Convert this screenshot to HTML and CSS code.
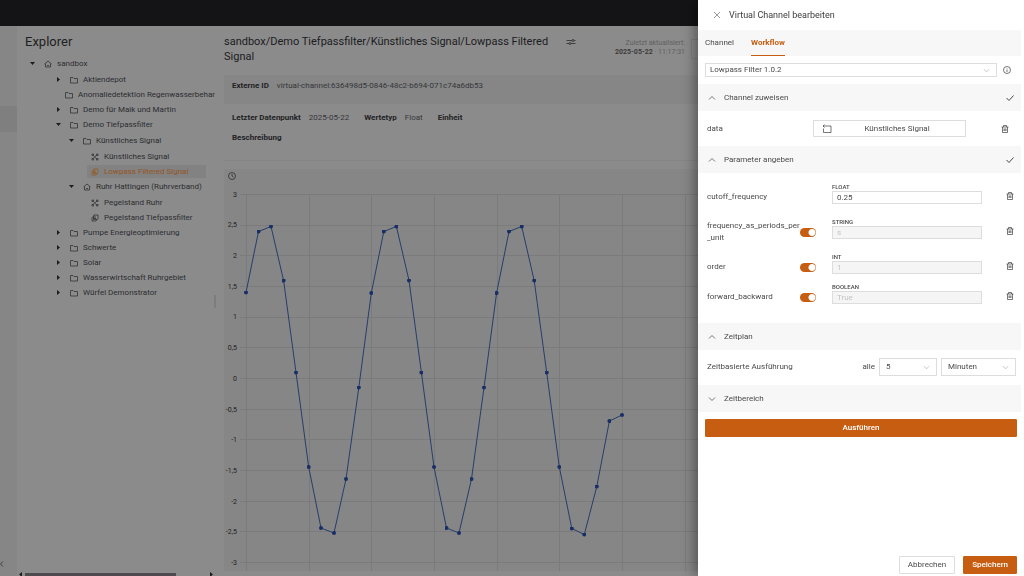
FILE: index.html
```html
<!DOCTYPE html>
<html lang="de">
<head>
<meta charset="utf-8">
<title>Virtual Channel bearbeiten</title>
<link rel="stylesheet" href="styles.css">
</head>
<body>
<svg class="sprite" aria-hidden="true">
  <symbol id="house" viewBox="0 0 16 16"><path d="M1 8 8 2l7 6M3 7v7h10V7M6 10.500q2 2 4 0"/></symbol>
  <symbol id="folder" viewBox="0 0 16 16"><path d="M1 3h5l2 2h7v9H1z"/></symbol>
  <symbol id="signal" viewBox="0 0 16 16"><path d="M2 2h3v3H2zM11 2h3v3h-3zM2 11h3v3H2zM11 11h3v3h-3zM5 5l2 2 3-1 1-1M4 11l3-3 4 3"/></symbol>
  <symbol id="virtual" viewBox="0 0 16 16"><path d="M6 2h8v7q0 2-2 2H5V4q0-2 2-2M11 11v1q0 2-2 2H2V8q0-2 2-2h6M5 9h5"/></symbol>
  <symbol id="up" viewBox="0 0 16 16"><path d="m2 11 6-6 6 6"/></symbol>
  <symbol id="down" viewBox="0 0 16 16"><path d="m2 5 6 6 6-6"/></symbol>
  <symbol id="check" viewBox="0 0 16 16"><path d="m1 8 5 5 9-10"/></symbol>
  <symbol id="trash" viewBox="0 0 16 16"><path d="M1 4h14M5 4V1h6v3M3 4v11h10V4M6 7v5M8 7v5M10 7v5"/></symbol>
</svg>
<div class="app">
  <header class="topbar"></header>
  <div class="workspace">
    <nav class="rail" aria-label="Navigation">
      <span class="rail-active"></span>
      <button class="rail-toggle" aria-label="Einklappen"><svg viewBox="0 0 8 16"><path d="m6 3-5 5 5 5"/></svg></button>
    </nav>
    <aside class="explorer">
      <h1>Explorer</h1>
      <ul class="tree">
        <li><div class="node"><i class="caret open"></i><svg><use href="#house"/></svg><span>sandbox</span></div>
          <ul class="first">
            <li><div class="node"><i class="caret"></i><svg><use href="#folder"/></svg><span>Aktiendepot</span></div></li>
            <li><div class="node"><i class="caret"></i><svg><use href="#folder"/></svg><span>Anomaliedetektion Regenwasserbehandlung</span></div></li>
            <li><div class="node"><i class="caret"></i><svg><use href="#folder"/></svg><span>Demo für Maik und Martin</span></div></li>
            <li><div class="node"><i class="caret open"></i><svg><use href="#folder"/></svg><span>Demo Tiefpassfilter</span></div>
              <ul>
                <li><div class="node"><i class="caret open"></i><svg><use href="#folder"/></svg><span>Künstliches Signal</span></div>
                  <ul>
                    <li><div class="node leaf"><svg><use href="#signal"/></svg><span>Künstliches Signal</span></div></li>
                    <li><div class="node leaf selected"><svg><use href="#virtual"/></svg><span>Lowpass Filtered Signal</span></div></li>
                  </ul>
                </li>
                <li><div class="node"><i class="caret open"></i><svg><use href="#house"/></svg><span>Ruhr Hattingen (Ruhrverband)</span></div>
                  <ul>
                    <li><div class="node leaf"><svg><use href="#signal"/></svg><span>Pegelstand Ruhr</span></div></li>
                    <li><div class="node leaf"><svg><use href="#virtual"/></svg><span>Pegelstand Tiefpassfilter</span></div></li>
                  </ul>
                </li>
              </ul>
            </li>
            <li><div class="node"><i class="caret"></i><svg><use href="#folder"/></svg><span>Pumpe Energieoptimierung</span></div></li>
            <li><div class="node"><i class="caret"></i><svg><use href="#folder"/></svg><span>Schwerte</span></div></li>
            <li><div class="node"><i class="caret"></i><svg><use href="#folder"/></svg><span>Solar</span></div></li>
            <li><div class="node"><i class="caret"></i><svg><use href="#folder"/></svg><span>Wasserwirtschaft Ruhrgebiet</span></div></li>
            <li><div class="node"><i class="caret"></i><svg><use href="#folder"/></svg><span>Würfel Demonstrator</span></div></li>
          </ul>
        </li>
      </ul>
      <div class="hscroll"><i class="caret back"></i><span class="thumb"></span><i class="caret"></i></div>
      <span class="resizer"></span>
    </aside>
    <main class="content">
      <div class="page-head">
        <h2>sandbox/Demo Tiefpassfilter/Künstliches Signal/Lowpass Filtered Signal</h2>
        <button class="tune" aria-label="Einstellungen"><svg viewBox="0 0 20 16"><path d="M1 5h11M16 5h3M1 11h5M10 11h9"/><circle cx="14" cy="5" r="2"/><circle cx="8" cy="11" r="2"/></svg></button>
        <p class="updated">Zuletzt aktualisiert:<br><b>2025-05-22</b> · 11:17:31</p>
        <span class="head-actions"></span>
      </div>
      <dl class="facts shaded"><div><dt>Externe ID</dt><dd>virtual-channel:636498d5-0846-48c2-b694-071c74a6db53</dd></div></dl>
      <dl class="facts">
        <div><dt>Letzter Datenpunkt</dt><dd>2025-05-22</dd></div>
        <div><dt>Wertetyp</dt><dd>Float</dd></div>
        <div><dt>Einheit</dt><dd></dd></div>
      </dl>
      <dl class="facts last"><div><dt>Beschreibung</dt><dd></dd></div></dl>
      <section class="chart">
        <svg class="clock" viewBox="0 0 16 16"><circle cx="8" cy="8" r="7"/><path d="M8 4v4l3 2"/></svg>
        <svg class="plot" width="800" height="396" viewBox="0 0 800 396" role="img" aria-label="Messwerte">
          <defs><marker id="dot" viewBox="0 0 4 4" refX="2" refY="2" markerWidth="4" markerHeight="4" markerUnits="userSpaceOnUse"><circle cx="2" cy="2" r="2"/></marker></defs>
          <path class="grid" d="M16 10.500H800M16 41.500H800M16 71.500H800M16 102.500H800M16 133.500H800M16 163.500H800M16 194.500H800M16 225.500H800M16 255.500H800M16 286.500H800M16 317.500H800M16 347.500H800M16 378.500H800M22.500 10V391M85.500 10V391M147.500 10V391M210.500 10V391M273.500 10V391M335.500 10V391M398.500 10V391M461.500 10V391"/>
          <g class="ticks">
            <text x="13" y="13">3</text><text x="13" y="43">2,5</text><text x="13" y="74">2</text><text x="13" y="105">1,5</text><text x="13" y="135">1</text><text x="13" y="166">0,5</text><text x="13" y="197">0</text><text x="13" y="228">-0,5</text><text x="13" y="258">-1</text><text x="13" y="289">-1,5</text><text x="13" y="320">-2</text><text x="13" y="350">-2,5</text><text x="13" y="381">-3</text>
          </g>
          <polyline class="series" points="22,108.500 34.500,47.500 47,42.500 59.600,96.500 72,188.500 84.700,283 97,344 110,349 122,295 134.800,203.500 147.300,109 159.800,47.500 172.400,42.500 185,96.500 197.400,188.500 210,283 222.500,344 235,349 247.500,295 260,203.500 272.600,109 285,47.500 297.700,42.500 310.200,96.500 322.700,188.500 335.300,283 347.800,344.500 360.300,350.500 372.800,302.500 385.400,237 398,231"/>
        </svg>
      </section>
    </main>
  </div>
</div>

<form class="drawer" aria-label="Virtual Channel bearbeiten">
  <header class="drawer-head">
    <button type="button" aria-label="Schließen"><svg class="ic" viewBox="0 0 16 16"><path d="m2 2 12 12M14 2 2 14"/></svg></button>
    <h2>Virtual Channel bearbeiten</h2>
  </header>
  <div class="tabs" role="tablist">
    <button type="button" role="tab">Channel</button>
    <button type="button" role="tab" aria-selected="true">Workflow</button>
  </div>
  <div class="workflow">
    <div class="select slim"><select aria-label="Workflow"><option>Lowpass Filter 1.0.2</option></select><svg><use href="#down"/></svg></div>
    <svg class="info" viewBox="0 0 16 16"><circle cx="8" cy="8" r="7"/><path d="M8 7v5M8 4v1"/></svg>
  </div>

  <button type="button" class="panel"><svg><use href="#up"/></svg><span>Channel zuweisen</span><svg class="tick"><use href="#check"/></svg></button>
  <div class="assign">
    <span>data</span>
    <button type="button" class="signal"><svg viewBox="0 0 20 18"><path d="M3 9v8h15V4H2M5 1 2 4l3 3"/></svg><span>Künstliches Signal</span></button>
    <button type="button" class="remove small" aria-label="Löschen"><svg><use href="#trash"/></svg></button>
  </div>

  <button type="button" class="panel"><svg><use href="#up"/></svg><span>Parameter angeben</span><svg class="tick"><use href="#check"/></svg></button>
  <div class="params">
    <div class="param">
      <label class="name" for="cutoff">cutoff_frequency</label>
      <span></span>
      <div class="field"><span>FLOAT</span><input id="cutoff" type="text" value="0.25"></div>
      <button type="button" class="remove" aria-label="Löschen"><svg><use href="#trash"/></svg></button>
    </div>
    <div class="param">
      <label class="name" for="periods">frequency_as_periods_per<wbr>_unit</label>
      <input type="checkbox" class="switch" aria-label="Standardwert" checked>
      <div class="field"><span>STRING</span><input id="periods" type="text" value="s" disabled></div>
      <button type="button" class="remove" aria-label="Löschen"><svg><use href="#trash"/></svg></button>
    </div>
    <div class="param">
      <label class="name" for="order">order</label>
      <input type="checkbox" class="switch" aria-label="Standardwert" checked>
      <div class="field"><span>INT</span><input id="order" type="text" value="1" disabled></div>
      <button type="button" class="remove" aria-label="Löschen"><svg><use href="#trash"/></svg></button>
    </div>
    <div class="param">
      <label class="name" for="forward">forward_backward</label>
      <input type="checkbox" class="switch" aria-label="Standardwert" checked>
      <div class="field"><span>BOOLEAN</span><input id="forward" type="text" value="True" disabled></div>
      <button type="button" class="remove" aria-label="Löschen"><svg><use href="#trash"/></svg></button>
    </div>
  </div>

  <button type="button" class="panel"><svg><use href="#up"/></svg><span>Zeitplan</span></button>
  <div class="schedule">
    <span class="caption">Zeitbasierte Ausführung</span>
    <label for="every">alle</label>
    <div class="select count"><select id="every"><option>5</option></select><svg><use href="#down"/></svg></div>
    <div class="select unit"><select aria-label="Einheit"><option>Minuten</option></select><svg><use href="#down"/></svg></div>
  </div>
  <button type="button" class="panel"><svg><use href="#down"/></svg><span>Zeitbereich</span></button>
  <button type="button" class="btn primary run">Ausführen</button>
  <footer class="drawer-foot">
    <button type="button" class="btn">Abbrechen</button>
    <button type="submit" class="btn primary">Speichern</button>
  </footer>
</form>
</body>
</html>
```

FILE: styles.css
```css
* { box-sizing: border-box; margin: 0; padding: 0; }
body { font: 8px/12px Roboto, "Liberation Sans", sans-serif; color: #262626; }
button, input, select { font: inherit; color: inherit; background: none; border: 0; border-radius: 0; }
ul { list-style: none; }
svg { display: block; flex: none; fill: none; stroke: currentColor; stroke-width: 1.5; }
text { stroke: none; }
.sprite { position: absolute; width: 0; height: 0; }

/* Dimmed application */
.app { display: flex; flex-direction: column; height: 100vh; background: #8b8b8b; overflow: hidden; }
.topbar { flex: none; height: 26px; background: #141316; }
.workspace { flex: 1; display: flex; min-height: 0; }
.rail { width: 17px; display: flex; flex-direction: column; justify-content: space-between; padding: 80px 0 5px; background: #868686; }
.rail-active { height: 26px; background: #7f7f7f; }
.rail-toggle { width: 4px; height: 14px; }
.rail-toggle svg { width: 4px; height: 10px; }

.explorer { position: relative; width: 199px; flex: none; display: flex; flex-direction: column; padding: 8px 1px 0 8px; overflow: hidden; }
.explorer h1 { font-size: 13px; line-height: 16px; font-weight: 400; color: #1e1f22; }
.tree { flex: 1; padding-top: 6px; overflow: hidden; }
.tree ul { padding: 1px 0 0 13px; }
.tree ul.first { padding-left: 26px; }
.node { display: flex; align-items: center; height: 15px; white-space: nowrap; color: #2c2d30; }
.node svg { width: 8px; height: 8px; margin: 0 5px 0 9px; }
.node .caret { margin-left: 5px; }
.leaf { margin-left: 10px; padding-right: 18px; width: max-content; }
.leaf svg { margin-left: 4px; }
.selected { color: #95551f; background: #828282; height: 13px; margin-block: 1px; }
.caret { width: 5px; height: 5px; background: #1c1c1c; clip-path: polygon(20% 0, 80% 50%, 20% 100%); }
.caret.open { clip-path: polygon(0 20%, 100% 20%, 50% 80%); }
.caret.back { clip-path: polygon(80% 0, 20% 50%, 80% 100%); }
.hscroll { display: flex; align-items: center; justify-content: space-between; height: 3px; margin-left: -8px; padding: 0 1px; }
.thumb { width: 151px; height: 3px; margin: 0 auto 0 2px; background: #4d4b4d; }
.resizer { position: absolute; right: 0; top: 269px; width: 2px; height: 13px; background: #7d7d7d; }

.content { flex: 1; min-width: 0; display: flex; flex-direction: column; padding: 8px 0 5px 8px; }
.page-head { display: flex; align-items: flex-start; height: 41px; }
.page-head h2 { width: 330px; font-size: 11px; line-height: 15px; font-weight: 400; color: #1b1c1f; }
.tune { margin: 4px 0 0 12px; }
.tune svg { width: 10px; height: 8px; }
.updated { margin-left: auto; padding-top: 5px; font-size: 7px; line-height: 9px; text-align: right; color: #606060; }
.updated b { color: #3c3c3c; }
.head-actions { width: 333px; height: 20px; margin: 5px 0 0 6px; border: 1px solid #808080; }
.facts { display: flex; gap: 15px; padding: 4px 8px 4px; line-height: 12px; }
.facts div { display: flex; gap: 8px; }
.facts dt { font-weight: 700; color: #222326; }
.facts dd { color: #35363a; }
.facts.shaded { margin-bottom: 4px; padding-block: 4px 13px; background: #868686; }
.facts.shaded { padding-block: 5px 12px; }
.facts.last { padding-bottom: 16px; margin-bottom: 8px; border-bottom: 1px solid #848484; }
.chart { flex: 1; min-height: 0; overflow: hidden; background: #868686; }
.clock { width: 8px; height: 8px; margin: 3px 0 0 4px; color: #2a2a2a; }
.plot { margin-top: 4px; }
.grid { stroke: #7b7b7b; stroke-width: 1; }
.ticks { font-size: 7px; text-anchor: end; fill: #222; }
.series { stroke: #263e6b; stroke-width: 1; marker: url(#dot); }
#dot circle { fill: #182f66; stroke: none; }

/* Drawer */
.drawer { position: fixed; inset: 0 0 0 auto; width: 326px; display: flex; flex-direction: column; background: #fff; color: #4a4a4a; box-shadow: -3px 0 12px #0006; }
.drawer-head { display: flex; align-items: center; gap: 8px; height: 30px; padding-left: 15px; }
.drawer-head h2 { font-size: 9px; font-weight: 400; color: #3c3c3c; }
.drawer-head .ic { width: 8px; height: 8px; color: #777; }
.tabs { display: flex; gap: 17px; height: 26px; margin-right: 3px; padding-left: 7px; background: #f7f7f7; }
.tabs [aria-selected] { color: #c65d10; font-weight: 700; border-bottom: 1px solid #c65d10; }
.workflow { display: flex; align-items: center; gap: 6px; padding: 7px 13px 7px 7px; }
.info { width: 8px; height: 8px; }
.select { display: grid; align-items: center; border: 1px solid #ddd; height: 18px; }
.select > * { grid-area: 1 / 1; }
.select select { appearance: none; height: 16px; width: 100%; padding: 0 6px; }
.select svg { width: 7px; height: 7px; margin-right: 6px; justify-self: end; color: #aaa; pointer-events: none; }
.select.slim { flex: 1; height: 14px; }
.select.slim select { height: 12px; padding-left: 4px; }
.panel { display: flex; align-items: center; gap: 8px; flex: none; height: 27px; margin-right: 3px; padding: 0 7px 0 10px; background: #f7f7f7; }
.panel svg { width: 8px; height: 8px; }
.panel .tick { margin-left: auto; stroke-width: 2; }
.assign { display: flex; align-items: center; padding: 9px 15px 9px 9px; }
.signal { display: flex; align-items: center; width: 153px; height: 17px; margin: 0 auto; padding: 0 8px; border: 1px solid #ddd; }
.signal svg { width: 10px; height: 9px; }
.signal span { flex: 1; padding-left: 5px; text-align: center; }
.assign .signal { margin: 0 35px 0 auto; }
.params { display: flex; flex-direction: column; gap: 8px; padding: 9px 10px 19px 9px; }
.param { display: grid; grid-template-columns: 93px 16px 1fr 8px; align-items: center; }
.name { padding-top: 8px; line-height: 12px; }
.switch { appearance: none; width: 16px; height: 9px; margin-top: 8px; border-radius: 5px; background: radial-gradient(circle at 12px 50%, #fff 3px, #c65d10 4px); }
.field { display: flex; flex-direction: column; margin: 0 24px 0 16px; }
.field span { font-size: 6px; line-height: 9px; font-weight: 500; }
.field input { width: 100%; height: 13px; padding: 0 4px; border: 1px solid #ddd; }
.field input:disabled { background: #f5f5f5; color: #c4c4c4; }
.remove { width: 8px; height: 10px; }
.remove svg { width: 8px; height: 10px; }
.remove.small, .remove.small svg { width: 8px; height: 8px; }
.param .remove { margin-top: 6px; }
.schedule { display: flex; align-items: center; gap: 4px; padding: 8px 8px 9px 9px; }
.caption { margin-right: auto; }
.count { width: 58px; }
.unit { width: 75px; }
.btn { height: 18px; padding: 0 8px; border: 1px solid #ddd; border-radius: 1px; }
.btn.primary { background: #c65d10; border-color: #c65d10; color: #fff; font-weight: 500; }
.run { flex: none; margin: 7px 7px 0; }
.drawer-foot { display: flex; justify-content: flex-end; gap: 8px; margin-top: auto; padding: 0 7px 2px; }
```
